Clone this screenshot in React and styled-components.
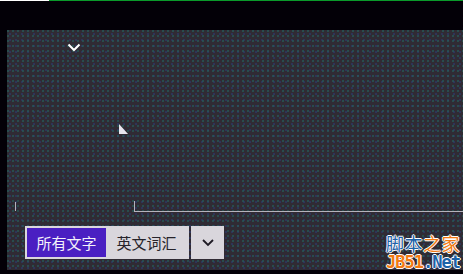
import React from 'react';
import styled, { createGlobalStyle } from 'styled-components';

const GlobalStyle = createGlobalStyle`
  html, body {
    margin: 0;
    padding: 0;
    background: #030007;
    font-family: "Noto Sans CJK SC", "Noto Sans", sans-serif;
  }
`;

const Page = styled.div`
  position: relative;
  width: 463px;
  height: 274px;
  overflow: hidden;
  background: #030007;
`;

const TopStrip = styled.div`
  display: flex;
  height: 1px;
`;

const StripPart = styled.div`
  width: ${p => p.$w || 'auto'};
  flex: ${p => (p.$w ? 'none' : '1')};
  background: ${p => p.$color};
`;

const Panel = styled.div`
  position: relative;
  margin: 29px 0 0 7px;
  height: 240px;
  padding-top: 13px;
  box-sizing: border-box;
  background-color: #302b34;
  background-image:
    radial-gradient(circle at 1px 1px, rgba(35, 100, 95, 0.6) 0.7px, transparent 1px),
    radial-gradient(circle at 3px 4px, rgba(45, 60, 120, 0.55) 0.7px, transparent 1px);
  background-size: 5px 5px, 6px 6px;
`;

const Chevron = styled.svg`
  display: block;
  margin-left: 60px;
  width: 14px;
  height: 9px;
`;

const Cursor = styled.div`
  position: absolute;
  left: 112px;
  top: 94px;
  width: 9px;
  height: 10px;
  background: #e8e6ee;
  clip-path: polygon(0 0, 100% 100%, 0 100%);
`;

const Ruler = styled.div`
  display: flex;
  align-items: flex-end;
  height: 10px;
  margin-top: 150px;
`;

const Tick = styled.div`
  width: 1px;
  height: 9px;
  margin-left: 8px;
  align-self: flex-start;
  background: #b4b2bc;
`;

const Track = styled.div`
  flex: 1;
  height: 10px;
  margin-left: 118px;
  border-left: 1px solid #b4b2bc;
  border-bottom: 1px solid #b4b2bc;
`;

const Controls = styled.div`
  display: flex;
  gap: 2px;
  margin: 14px 0 0 18px;
`;

const Group = styled.div`
  display: flex;
  border: 2px solid #d9d6dc;
  background: #d9d6dc;
`;

const Tab = styled.button`
  height: 29px;
  width: ${p => p.$w}px;
  padding: 0;
  border: none;
  font-family: "Noto Sans CJK SC", sans-serif;
  font-size: 15px;
  line-height: 29px;
  color: ${p => (p.$active ? '#f4f2fa' : '#26232a')};
  background: ${p => (p.$active ? '#4a1fc2' : '#d9d6dc')};
`;

const DropButton = styled.button`
  display: flex;
  align-items: center;
  justify-content: center;
  width: 33px;
  height: 33px;
  padding: 0;
  border: none;
  background: #d9d6dc;
`;

const Watermark = styled.div`
  position: absolute;
  left: 386px;
  top: 233px;
  display: flex;
  flex-direction: column;
  text-shadow: 1px 0 0 #fff, -1px 0 0 #fff, 0 1px 0 #fff, 0 -1px 0 #fff;
`;

const MarkTitle = styled.div`
  display: flex;
  height: 20px;
  font-family: "Noto Sans CJK SC", sans-serif;
  font-size: 18px;
  line-height: 20px;
  letter-spacing: 0.5px;
`;

const MarkUrl = styled.div`
  display: flex;
  height: 18px;
  font-family: "DejaVu Sans Mono", monospace;
  font-size: 17px;
  font-weight: 700;
  line-height: 18px;
  letter-spacing: -1px;
`;

const Part = styled.span`
  display: block;
  color: ${p => (p.$orange ? '#f27a12' : '#1d62a8')};
`;

export default function App() {
  return (
    <Page>
      <GlobalStyle />
      <TopStrip>
        <StripPart $w="49px" $color="#ffffff" />
        <StripPart $color="#0a9a2a" />
      </TopStrip>
      <Panel>
        <Chevron viewBox="0 0 14 9">
          <path d="M1.5 1.5 L7 7 L12.5 1.5" fill="none" stroke="#ffffff" strokeWidth="2" />
        </Chevron>
        <Cursor />
        <Ruler>
          <Tick />
          <Track />
        </Ruler>
        <Controls>
          <Group>
            <Tab $active $w={79}>所有文字</Tab>
            <Tab $w={81}>英文词汇</Tab>
          </Group>
          <DropButton>
            <svg width="14" height="9" viewBox="0 0 14 9">
              <path d="M2 2 L7 7 L12 2" fill="none" stroke="#1e1a24" strokeWidth="1.8" />
            </svg>
          </DropButton>
        </Controls>
      </Panel>
      <Watermark>
        <MarkTitle>
          <Part>脚本</Part>
          <Part $orange>之家</Part>
        </MarkTitle>
        <MarkUrl>
          <Part $orange>JB51</Part>
          <Part>.Net</Part>
        </MarkUrl>
      </Watermark>
    </Page>
  );
}
